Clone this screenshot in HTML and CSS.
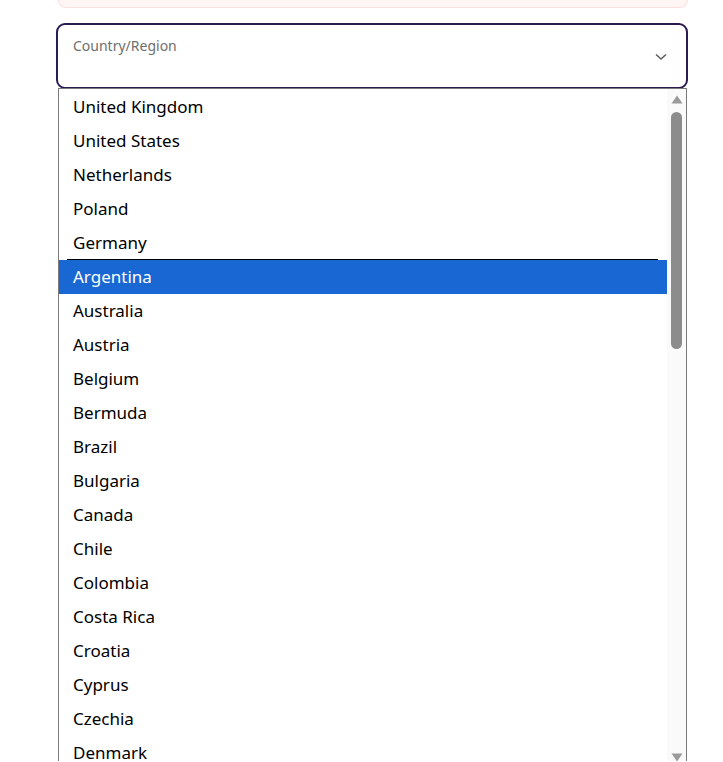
FILE: index.html
```html
<!DOCTYPE html>
<html lang="en">
<head>
<meta charset="utf-8">
<title>Country/Region</title>
<link rel="stylesheet" href="styles.css">
</head>
<body>
<div class="form">
  <div class="notice"></div>
  <div class="select">
    <span class="label">Country/Region</span>
    <svg class="chevron" width="12" height="8" viewBox="0 0 12 8"><path d="M1 1.5 L6 6 L11 1.5" fill="none" stroke="#5f5f5f" stroke-width="1.6"/></svg>
  </div>
  <div class="listbox">
    <ul class="options">
      <li class="option">United Kingdom</li>
      <li class="option">United States</li>
      <li class="option">Netherlands</li>
      <li class="option">Poland</li>
      <li class="option option-sep">Germany</li>
      <li class="option option-active">Argentina</li>
      <li class="option">Australia</li>
      <li class="option">Austria</li>
      <li class="option">Belgium</li>
      <li class="option">Bermuda</li>
      <li class="option">Brazil</li>
      <li class="option">Bulgaria</li>
      <li class="option">Canada</li>
      <li class="option">Chile</li>
      <li class="option">Colombia</li>
      <li class="option">Costa Rica</li>
      <li class="option">Croatia</li>
      <li class="option">Cyprus</li>
      <li class="option">Czechia</li>
      <li class="option">Denmark</li>
    </ul>
    <div class="scrollbar">
      <svg class="arrow arrow-up" width="12" height="9" viewBox="0 0 12 9"><path d="M6 0.5 L11.5 8.5 L0.5 8.5 Z" fill="#9a9a9a"/></svg>
      <div class="thumb"></div>
      <svg class="arrow arrow-down" width="12" height="9" viewBox="0 0 12 9"><path d="M0.5 0.5 L11.5 0.5 L6 8.5 Z" fill="#9a9a9a"/></svg>
    </div>
  </div>
</div>
</body>
</html>
```

FILE: styles.css
```css
html, body {
  margin: 0;
  padding: 0;
  background: #ffffff;
  height: 762px;
  overflow: hidden;
}

.form {
  margin-left: 56px;
  width: 632px;
  display: flex;
  flex-direction: column;
}

.notice {
  margin-left: 2px;
  width: 628px;
  height: 7px;
  background: #fff5f5;
  border: 1px solid #fbdede;
  border-top: none;
  border-radius: 0 0 9px 9px;
}

.select {
  margin-top: 15px;
  height: 62px;
  border: 2px solid #2b1b50;
  border-radius: 9px;
  position: relative;
  display: flex;
  align-items: center;
  justify-content: flex-end;
  padding-right: 19px;
}

.label {
  position: absolute;
  left: 15px;
  top: 13px;
  font-family: "Noto Sans", "Open Sans", sans-serif;
  font-size: 14px;
  line-height: 16px;
  color: #6e6e6e;
}

.chevron {
  display: block;
  margin-top: 1px;
}

.listbox {
  margin-top: -1px;
  margin-left: 2px;
  width: 627px;
  height: 672px;
  border: 1px solid #7a7a7a;
  border-bottom: none;
  background: #ffffff;
  display: flex;
  position: relative;
}

.options {
  list-style: none;
  margin: 0;
  padding: 1px 0 0 0;
  flex: 1;
  min-width: 0;
  overflow: hidden;
}

.option {
  height: 34px;
  line-height: 34px;
  padding-left: 14px;
  font-family: "Noto Sans", "Open Sans", sans-serif;
  font-size: 17px;
  color: #000000;
  position: relative;
  white-space: nowrap;
}

.option-sep::after {
  content: "";
  position: absolute;
  left: 8px;
  right: 9px;
  bottom: 0;
  height: 1px;
  background: #000000;
}

.option-active {
  background: #1967d2;
  color: #ffffff;
}

.scrollbar {
  width: 19px;
  background: #fafafa;
  display: flex;
  flex-direction: column;
  align-items: center;
}

.arrow {
  display: block;
  flex: none;
}

.arrow-up {
  margin-top: 6px;
}

.thumb {
  margin-top: 8px;
  width: 11px;
  height: 237px;
  border-radius: 6px;
  background: #8c8c8c;
  flex: none;
}

.arrow-down {
  margin-top: 404px;
}
```
